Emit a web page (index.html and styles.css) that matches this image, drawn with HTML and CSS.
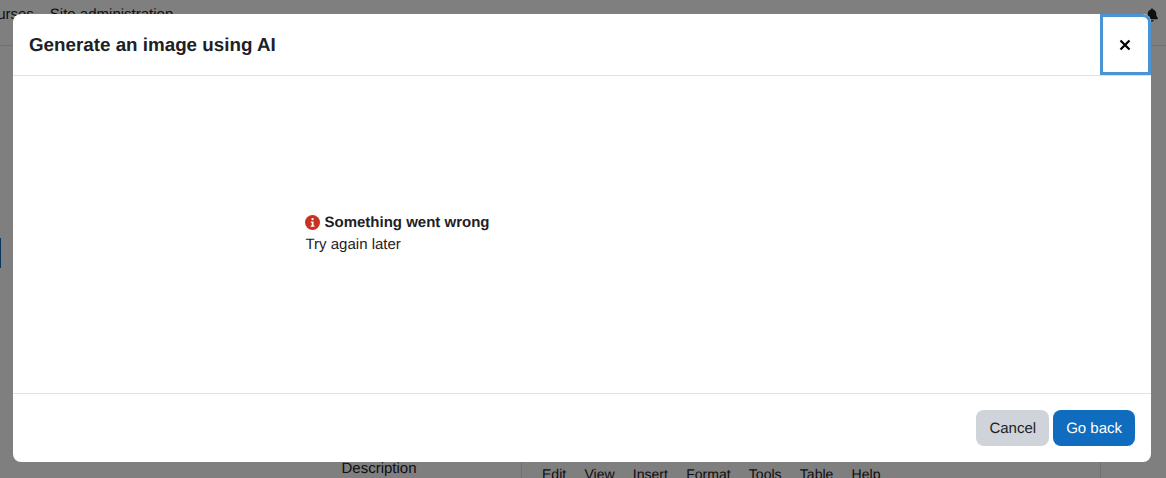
FILE: index.html
```html
<!DOCTYPE html>
<html lang="en">
<head>
<meta charset="utf-8">
<title>Generate an image using AI</title>
<link rel="stylesheet" href="styles.css">
</head>
<body>
<div class="page">
  <header class="navbar">
    <nav class="nav-links"><span class="nav-cut">Courses</span><span>Site administration</span></nav>
    <svg class="bell" viewBox="0 0 448 512" aria-hidden="true"><path d="M224 0c-17.700 0-32 14.300-32 32v19.200C119 66 64 130.600 64 208v18.800c0 47-17.300 92.400-48.500 127.600l-7.400 8.300c-8.400 9.400-10.400 22.900-5.300 34.400S19.400 416 32 416h384c12.600 0 24-7.400 29.200-18.900s3.100-25-5.300-34.400l-7.400-8.300C401.300 319.200 384 273.900 384 226.800V208c0-77.400-55-142-128-156.800V32c0-17.700-14.300-32-32-32zm45.300 493.300c12-12 18.700-28.300 18.700-45.300H160c0 17 6.700 33.300 18.700 45.300S207 512 224 512s33.300-6.700 45.300-18.700z"/></svg>
  </header>
  <div class="page-body">
    <span class="active-tab"></span>
    <div class="form-row">
      <span class="form-label">Description</span>
      <div class="editor">
        <div class="editor-menu"><span>Edit</span><span>View</span><span>Insert</span><span>Format</span><span>Tools</span><span>Table</span><span>Help</span></div>
      </div>
    </div>
  </div>
</div>
<div class="backdrop"></div>
<div class="modal" role="dialog" aria-labelledby="modal-title">
  <div class="modal-header">
    <h5 class="modal-title" id="modal-title">Generate an image using AI</h5>
    <button class="close-btn" aria-label="Close">
      <svg viewBox="0 0 12 12" aria-hidden="true"><path d="M1.500 1.500 L10.500 10.500 M10.500 1.500 L1.500 10.500"/></svg>
    </button>
  </div>
  <div class="modal-body">
    <div class="message">
      <div class="message-title">
        <svg class="error-icon" viewBox="0 0 16 16" aria-hidden="true"><circle cx="8" cy="8" r="8" fill="#ca3120"/><rect x="6.900" y="3.200" width="2.300" height="2.300" rx="1" fill="#fff"/><path d="M6.200 6.900h2.900v4.300h1v1.300H6.100v-1.300h1.100V8.200h-1z" fill="#fff"/></svg>
        <strong>Something went wrong</strong>
      </div>
      <div>Try again later</div>
    </div>
  </div>
  <div class="modal-footer">
    <button class="btn btn-secondary">Cancel</button>
    <button class="btn btn-primary">Go back</button>
  </div>
</div>
</body>
</html>
```
FILE: styles.css
```css
* { box-sizing: border-box; }
html, body { margin: 0; height: 100%; }
body {
  width: 1166px;
  height: 478px;
  overflow: hidden;
  position: relative;
  background: #fff;
  color: #1d2125;
  font-family: "Liberation Sans", Arial, sans-serif;
  font-size: 15px;
  line-height: 22.5px;
  text-rendering: geometricPrecision;
}
.page { height: 478px; display: flex; flex-direction: column; overflow: hidden; }
.navbar {
  height: 46px;
  flex: none;
  display: flex;
  justify-content: space-between;
  border-bottom: 1px solid #dee2e6;
  padding: 4px 8px 0 0;
}
.nav-links { display: flex; gap: 16px; margin-left: -22px; }
.bell { width: 12px; height: 14px; margin-top: 4px; fill: #1d2125; }
.page-body { flex: 1; position: relative; display: flex; flex-direction: column; justify-content: flex-end; }
.active-tab { position: absolute; left: 0; top: 192px; width: 1px; height: 30px; background: #0f6cbf; }
.form-row { display: flex; height: 22px; padding-left: 341.500px; }
.form-label { width: 179.500px; flex: none; line-height: 21px; padding-top: 2px; }
.editor {
  width: 580px;
  border-left: 1px solid #dee2e6;
  border-right: 1px solid #dee2e6;
  padding: 8px 0 0 20px;
}
.editor-menu { display: flex; gap: 18.200px; font-size: 14.0625px; line-height: 20px; }
.backdrop { position: absolute; inset: 0; background: rgba(0, 0, 0, .5); }
.modal {
  position: absolute;
  left: 13px;
  top: 14px;
  width: 1138px;
  height: 448px;
  background: #fff;
  border-radius: 8px;
  display: flex;
  flex-direction: column;
  overflow: hidden;
}
.modal-header {
  height: 62px;
  flex: none;
  display: flex;
  align-items: flex-start;
  justify-content: space-between;
  padding-left: 16px;
  border-bottom: 1px solid #dee2e6;
}
.modal-title { margin: 0; padding-top: 20px; font-size: 18.800px; font-weight: 700; line-height: 22.500px; }
.close-btn {
  width: 51px;
  height: 61px;
  flex: none;
  padding: 0 1px 0 0;
  display: flex;
  align-items: center;
  justify-content: center;
  background: #fff;
  border: 3px solid #4a94d4;
  border-top-right-radius: 8px;
}
.close-btn svg { width: 12px; height: 12px; fill: none; stroke: #000; stroke-width: 2.300; }
.modal-body { flex: 1; display: flex; align-items: center; padding: 0 0 2px 292.500px; }
.message { line-height: 22px; }
.message-title { display: flex; align-items: center; gap: 4.500px; }
.error-icon { width: 15px; height: 15px; flex: none; margin: 0 0 1px -.500px; }
.modal-footer {
  height: 69px;
  flex: none;
  display: flex;
  justify-content: flex-end;
  align-items: center;
  gap: 4px;
  padding-right: 16px;
  border-top: 1px solid #dee2e6;
}
.btn {
  height: 36px;
  padding: 2px 13px 0;
  border: 0;
  border-radius: 8px;
  font: inherit;
  text-rendering: inherit;
}
.btn-secondary { background: #ced4da; color: #1d2125; }
.btn-primary { background: #0f6cbf; color: #fff; }
```
